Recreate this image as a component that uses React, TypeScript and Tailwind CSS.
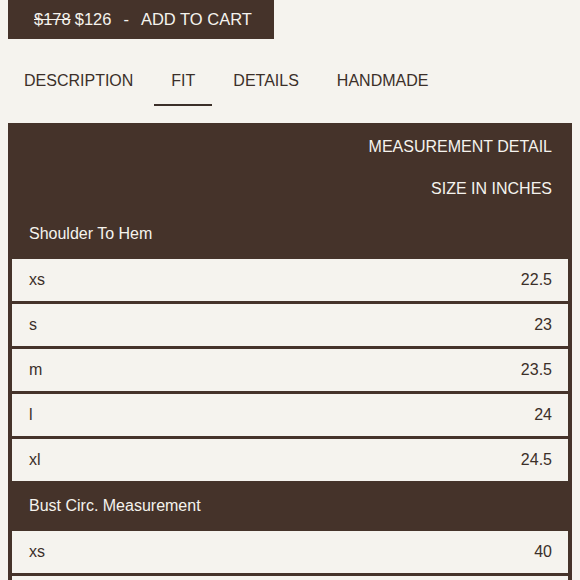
import React from 'react';

const sections = [
  {
    title: 'Shoulder To Hem',
    rows: [
      ['xs', '22.5'],
      ['s', '23'],
      ['m', '23.5'],
      ['l', '24'],
      ['xl', '24.5'],
    ],
  },
  {
    title: 'Bust Circ. Measurement',
    rows: [
      ['xs', '40'],
      ['s', '42'],
    ],
  },
];

const tabs = ['DESCRIPTION', 'FIT', 'DETAILS', 'HANDMADE'];

const App: React.FC = () => {
  return (
    <div
      className="w-[580px] h-[580px] overflow-hidden bg-[#f5f3ee] text-[#3b2f29]"
      style={{ fontFamily: '"Liberation Sans", Arial, sans-serif' }}
    >
      <div className="ml-2 w-[266px] h-[39px] bg-[#45332a] flex items-center pl-[26px] text-[16.5px] text-[#f5f3ee]">
        <span className="line-through">$178</span>
        <span className="ml-[4px]">$126</span>
        <span className="mx-[12px]">-</span>
        <span>ADD TO CART</span>
      </div>

      <div className="flex pl-[7px] gap-[4px] mt-[28px] h-[56px]">
        {tabs.map(t => (
          <div key={t} className="relative px-[17px] pt-[2px] text-[16px]">
            {t}
            {t === 'FIT' && <div className="absolute left-0 right-0 top-[37px] h-[2px] bg-[#3b2f29]" />}
          </div>
        ))}
      </div>

      <div className="mx-2 bg-[#45332a] px-[4px] pb-[4px]">
        <div className="text-right text-[#f5f3ee] text-[16px] pr-[16px]">
          <div className="pt-[12px] h-[54px]">MEASUREMENT DETAIL</div>
          <div className="h-[32px]">SIZE IN INCHES</div>
        </div>
        {sections.map(s => (
          <div key={s.title}>
            <div className="h-[50px] flex items-center pl-[17px] text-[16px] text-[#f5f3ee]">{s.title}</div>
            <div className="flex flex-col gap-[3px]">
              {s.rows.map(([size, val]) => (
                <div key={size} className="h-[42px] bg-[#f5f3ee] flex items-center justify-between pl-[17px] pr-[16px] text-[16px]">
                  <span>{size}</span>
                  <span>{val}</span>
                </div>
              ))}
            </div>
          </div>
        ))}
      </div>
    </div>
  );
};

export default App;
